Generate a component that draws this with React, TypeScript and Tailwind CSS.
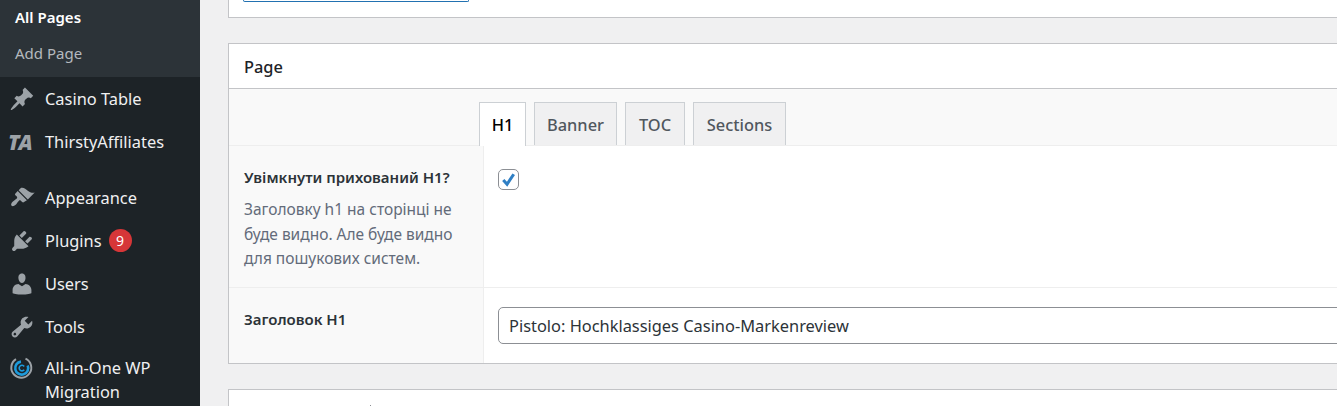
import type { ReactNode } from 'react';

const ICONS: Record<string, string> = {
  pin: 'M10.44 3.02l1.82-1.82 6.36 6.35-1.83 1.82c-1.05-.68-2.48-.57-3.41.36l-.75.75c-.92.93-1.04 2.35-.35 3.41l-1.83 1.82-2.41-2.41-2.8 2.79c-.42.42-3.38 2.71-3.8 2.29s1.86-3.39 2.28-3.81l2.79-2.79L4.1 9.36l1.83-1.82c1.05.69 2.48.57 3.4-.36l.75-.75c.93-.92 1.05-2.35.36-3.41z',
  brush: 'M14.48 11.06L7.41 3.99l1.5-1.5c.5-.56 2.3-.47 3.51.32 1.21.8 1.43 1.28 2.91 2.1 1.18.64 2.45 1.26 4.45.85zM13.77 11.77L6.7 4.7 4.93 6.47c-.39.39-.39 1.02 0 1.41l1.06 1.06c.39.39.39 1.03 0 1.42-.6.6-1.43 1.11-2.21 1.69-.35.26-.7.53-1.01.84-1.06 1.06-1.5 2.4-.77 3.13s2.07.29 3.13-.77c.31-.31.58-.66.84-1.01.58-.78 1.09-1.61 1.69-2.21.39-.39 1.03-.39 1.42 0l1.06 1.06c.39.39 1.02.39 1.41 0z',
  plug: 'M13.11 4.36L9.87 7.6 8 5.73l3.24-3.24c.35-.34 1.05-.2 1.56.32.52.51.66 1.21.31 1.55zm-8 1.77l.91-1.12 9.01 9.01-1.19.84c-.71.71-2.63 1.16-3.82 1.16H6.14L4.9 17.26c-.59.59-1.54.59-2.12 0-.59-.58-.59-1.53 0-2.12l1.24-1.24v-3.88c0-1.13.4-3.19 1.09-3.89zm7.26 3.97l3.24-3.24c.34-.35 1.04-.21 1.55.31.52.51.66 1.21.31 1.55l-3.24 3.25z',
  users: 'M10 9.25c-2.27 0-2.73-3.44-2.73-3.44C7 4.02 7.82 2 9.97 2c2.16 0 2.98 2.02 2.71 3.81 0 0-.41 3.44-2.68 3.44zm0 2.57L12.72 10c2.39 0 4.52 2.33 4.52 4.53v2.49s-3.65 1.13-7.24 1.13c-3.65 0-7.24-1.13-7.24-1.13v-2.49c0-2.25 1.94-4.48 4.47-4.48z',
  tools: 'M16.68 9.77c-1.34 1.34-3.3 1.67-4.95.99l-5.41 6.52c-.99.99-2.59.99-3.58 0s-.99-2.59 0-3.57l6.52-5.42c-.68-1.65-.35-3.61.99-4.95 1.28-1.28 3.12-1.62 4.72-1.06l-2.89 2.89 2.82 2.82 2.86-2.87c.53 1.58.18 3.39-1.08 4.65zM3.81 16.21c.4.39 1.04.39 1.43 0 .4-.4.4-1.04 0-1.43-.39-.4-1.03-.4-1.43 0-.39.39-.39 1.03 0 1.43z',
};

function DashIcon({ name }: { name: string }) {
  return (
    <svg viewBox="0 0 20 20" className="block w-[26px] h-[26px] fill-[#9ca2a7]">
      <path d={ICONS[name]} />
    </svg>
  );
}

function MigrationIcon() {
  return (
    <svg viewBox="0 0 26 26" className="block w-[26px] h-[26px]" fill="none">
      <path d="M7 4.2A10 10 0 1 0 16.5 3.6" stroke="#9ca2a7" strokeWidth="2" />
      <path d="M18.7 10.5A6.5 6.5 0 1 1 12 6.6" stroke="#1e9bdc" strokeWidth="2.6" />
      <path d="M15.2 14.8A2.8 2.8 0 1 1 15.2 11.4" stroke="#1e9bdc" strokeWidth="1.6" />
    </svg>
  );
}

function MenuItem({ icon, children, tight }: { icon: ReactNode; children: ReactNode; tight?: boolean }) {
  return (
    <li className={`flex items-start text-[16.4px] leading-[24px] text-[#f0f0f1] py-[9.5px] ${tight ? '-mt-[2px]' : ''}`}>
      <span className="w-[45px] h-[24px] shrink-0 pl-[9px] flex items-center">{icon}</span>
      <span className="min-w-0">{children}</span>
    </li>
  );
}

function Tab({ label, width, active }: { label: string; width: string; active?: boolean }) {
  return (
    <div
      className={
        active
          ? `${width} h-[44px] -mb-px pt-[1px] flex items-center justify-center border border-[#ccd0d4] border-b-0 bg-white text-black text-[16.4px] font-medium z-10`
          : `${width} h-[43px] pt-[2px] flex items-center justify-center border border-[#ccd0d4] border-b-0 bg-[#f0f0f1] text-[#50575e] text-[16.4px] font-medium`
      }
    >
      {label}
    </div>
  );
}

export default function App() {
  return (
    <div className="w-[1337px] h-[406px] overflow-hidden flex bg-[#f0f0f1] font-['Noto_Sans','Open_Sans',sans-serif]">
      {/* admin menu */}
      <aside className="w-[200px] shrink-0 bg-[#1d2327]">
        <ul className="bg-[#2c3338] pb-[5px]">
          <li className="h-[36px] pl-[15px] pb-[2px] flex items-center text-[15px] font-semibold text-white">All Pages</li>
          <li className="h-[36px] pl-[15px] pb-[2px] flex items-center text-[15px] text-[#b4b9be]">Add Page</li>
        </ul>
        <ul>
          <MenuItem icon={<DashIcon name="pin" />}>Casino Table</MenuItem>
          <MenuItem
            icon={<span className="block -ml-[1px] text-[21px] leading-[26px] font-black italic text-[#9ca2a7]">TA</span>}
          >
            ThirstyAffiliates
          </MenuItem>
          <li className="h-[13px]" />
          <MenuItem icon={<DashIcon name="brush" />}>Appearance</MenuItem>
          <MenuItem icon={<DashIcon name="plug" />}>
            <span className="flex items-center gap-[7px]">
              Plugins
              <span className="w-[23px] h-[23px] rounded-full bg-[#d63638] text-white text-[14px] flex items-center justify-center">9</span>
            </span>
          </MenuItem>
          <MenuItem icon={<DashIcon name="users" />}>Users</MenuItem>
          <MenuItem icon={<DashIcon name="tools" />}>Tools</MenuItem>
          <MenuItem tight icon={<MigrationIcon />}>All-in-One WP Migration</MenuItem>
        </ul>
      </aside>

      {/* content */}
      <main className="flex-1 min-w-0 pl-[28px] flex flex-col">
        <section className="h-[18px] -mr-[8px] shrink-0 bg-white border-x border-b border-[#c3c4c7] pl-[14px]">
          <div className="w-[226px] h-[2px] border-x border-b border-[#2271b1] rounded-b-[3px]" />
        </section>

        <section className="mt-[25px] -mr-[8px] shrink-0 bg-white border border-[#c3c4c7]">
          <h2 className="h-[45px] px-[15px] pt-[2px] flex items-center text-[16.4px] font-medium text-[#1d2327] border-b border-[#c3c4c7]">
            Page
          </h2>
          <div className="h-[57px] bg-[#f9f9f9] border-b border-[#eeeeee] pl-[250px] flex items-end gap-[8px]">
            <Tab label="H1" width="w-[47px]" active />
            <Tab label="Banner" width="w-[83px]" />
            <Tab label="TOC" width="w-[60px]" />
            <Tab label="Sections" width="w-[93px]" />
          </div>
          <div className="flex h-[142px] border-b border-[#eeeeee]">
            <div className="w-[255px] shrink-0 bg-[#f9f9f9] border-r border-[#eeeeee] pl-[15px] pr-[14px] pt-[19px]">
              <p className="text-[15px] leading-[24px] font-semibold text-[#2c3338] mb-[8px]">Увімкнути прихований Н1?</p>
              <p className="text-[15.5px] leading-[24.5px] text-[#636b7a]">
                Заголовку h1 на сторінці не буде видно. Але буде видно для пошукових систем.
              </p>
            </div>
            <div className="flex-1 pl-[14px] pt-[23px]">
              <div className="w-[21px] h-[21px] rounded-[5px] border border-[#8c8f94] bg-white flex items-center justify-center">
                <svg viewBox="0 0 20 20" className="w-[19px] h-[19px] fill-none stroke-[#2f7fc4] stroke-[3.2]">
                  <path d="M4.5 10.5l4 4.5 7-10.5" />
                </svg>
              </div>
            </div>
          </div>
          <div className="flex h-[75px]">
            <div className="w-[255px] shrink-0 bg-[#f9f9f9] border-r border-[#eeeeee] pl-[15px] pr-[14px] pt-[19px]">
              <p className="text-[15px] leading-[24px] font-semibold text-[#2c3338]">Заголовок Н1</p>
            </div>
            <div className="flex-1 pl-[14px] pt-[19px]">
              <input
                readOnly
                value="Pistolo: Hochklassiges Casino-Markenreview"
                className="w-full h-[37px] px-[10px] rounded-[5px] border border-[#8c8f94] bg-white text-[16.4px] text-[#2c3338] outline-none"
              />
            </div>
          </div>
        </section>

        <section className="mt-[25px] -mr-[8px] flex-1 bg-white border border-[#c3c4c7] pl-[141px] pt-[15px]">
          <div className="w-px h-px bg-[#8c8f94]" />
        </section>
      </main>
    </div>
  );
}
